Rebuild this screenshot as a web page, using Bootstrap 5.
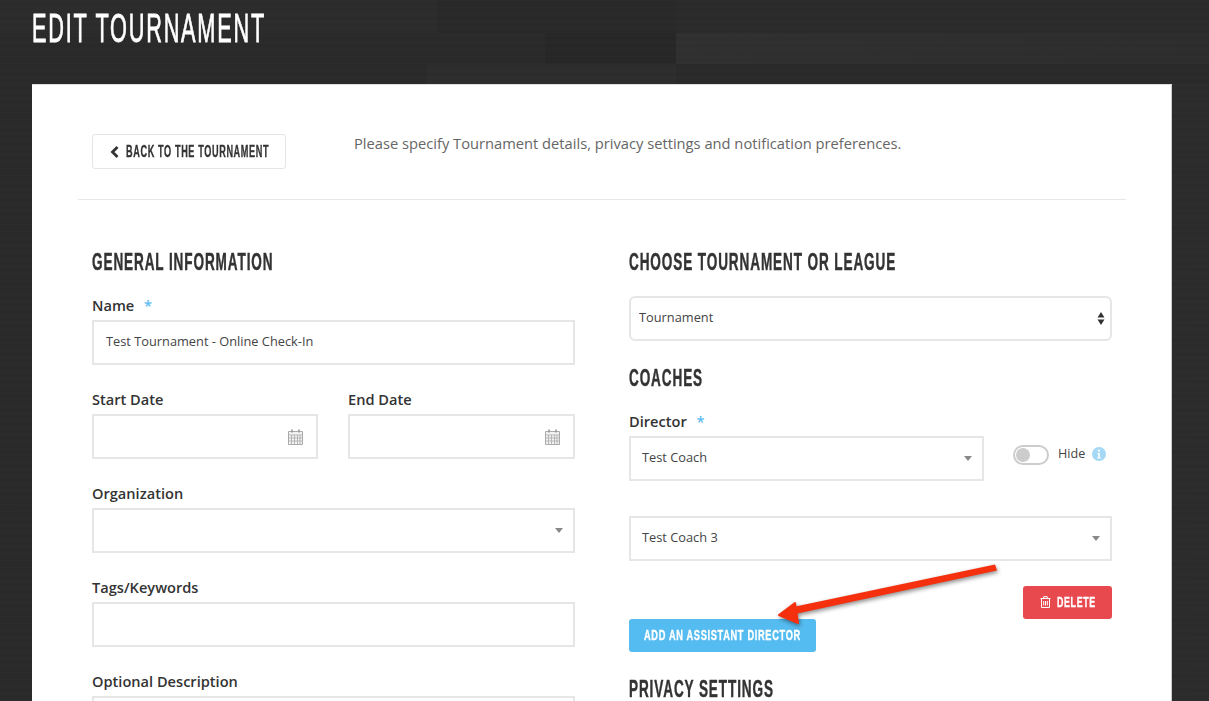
<!DOCTYPE html>
<html lang="en">
<head>
<meta charset="utf-8">
<title>Edit Tournament</title>
<link href="https://cdn.jsdelivr.net/npm/bootstrap@5.3.0/dist/css/bootstrap.min.css" rel="stylesheet">
<style>
html,body{height:100%;overflow:hidden}
body{font-family:"Open Sans","Noto Sans",sans-serif;color:#333;
 background-color:#292929;
 background-image:
  repeating-linear-gradient(180deg,rgba(255,255,255,.01) 0,rgba(255,255,255,.01) 1px,transparent 1px,transparent 3px,rgba(0,0,0,.03) 3px,rgba(0,0,0,.03) 4px,transparent 4px,transparent 7px),
  linear-gradient(90deg,#2c2c2c 0,#2c2c2c 437px,#292929 437px,#292929 676px,#2b2b2b 676px),
  linear-gradient(90deg,#2a2a2a 0,#2a2a2a 545px,#272727 545px,#272727 676px,#303030 676px,#2d2d2d 1209px),
  linear-gradient(90deg,#2a2a2a 0,#2a2a2a 426px,#2d2d2d 426px,#2d2d2d 676px,#2a2a2a 676px),
  linear-gradient(90deg,#2a2a2a,#2c2c2c);
 background-size:100% 100%,100% 33px,100% 31px,100% 20px,100% 100%;
 background-position:0 0,0 0,0 33px,0 64px,0 0;
 background-repeat:no-repeat}
.disp{font-family:"Liberation Sans",sans-serif;display:inline-block;transform-origin:left center;white-space:nowrap}
.head-bar{height:84px;padding-left:32px}
.page-title{margin:0;padding-top:6px;color:#fff;font-size:41px;line-height:44px;font-weight:400;letter-spacing:3.3px;transform:scaleX(.53);-webkit-text-stroke:.8px #fff}
.sheet{margin:0 37px 0 32px;background:#fff;padding:50px 46px 0;height:700px;box-shadow:inset 0 1px 0 #ddd,inset -1px 0 0 #ccc;position:relative}
.top-row{padding:0 14px;height:65px;gap:68px}
.back-btn{width:194px;height:35px;border:1px solid #e5e5e5;border-radius:3px;padding:0 0 0 17px;display:flex;align-items:center;gap:7px;background:#fff;color:#333;text-decoration:none;flex:none}
.back-label{font-size:16px;font-weight:700;letter-spacing:1.1px;transform:scaleX(.57);line-height:1;width:143px;-webkit-text-stroke:.35px #333}
.intro{font-size:14.7px;color:#666;margin:-1px 0 0;line-height:20px}
.rule{margin:0;border:0;border-top:1px solid #e6e6e6;opacity:1}
.cols{display:grid;grid-template-columns:483px 483px;gap:54px;padding:0 14px}
.sec-title{margin:0;font-size:23px;line-height:26px;font-weight:700;color:#333;letter-spacing:1.5px;transform:scaleX(.59);-webkit-text-stroke:.45px #333}
.lbl{display:block;font-size:14.6px;font-weight:600;line-height:18px;margin:0 0 6px;color:#333}
.lbl i{font-style:normal;color:#5bbcf0;margin-left:6px}
.fld{height:45px;border:2px solid #e6e6e6;border-radius:0;font-size:12.8px;color:#444;padding:0 12px 3px;box-shadow:none;background-color:#fff}
.form-select.fld{padding:0 30px 1px 11px;background-image:url("data:image/svg+xml,%3Csvg xmlns='http://www.w3.org/2000/svg' width='8' height='5'%3E%3Cpath d='M0 0h8L4 5z' fill='%23888'/%3E%3C/svg%3E");background-size:8px 5px;background-position:right 10px center}
.form-select.rounded-fld{border-radius:6px;padding-left:8px;background-image:url("data:image/svg+xml,%3Csvg xmlns='http://www.w3.org/2000/svg' width='8' height='13'%3E%3Cpath d='M4 0l3.5 5.5h-7zM4 13L.5 7.5h7z' fill='%23333'/%3E%3C/svg%3E");background-size:8px 13px;background-position:right 5px center}
.group{margin-bottom:25px}
.cal-wrap{position:relative}
.cal-ico{position:absolute;right:15px;top:15px;width:15px;height:16px}
.date-a{width:226px}
.date-b{width:227px}
.dir-sel{width:355px;flex:none}
.sw-box{margin-left:29px;padding-top:9px}
.form-check-input.sw{width:36px;height:20px;margin:0;flex:none;border:2px solid #ccc;border-radius:10px;background-color:#fff;background-image:url("data:image/svg+xml,%3Csvg xmlns='http://www.w3.org/2000/svg' viewBox='0 0 16 16'%3E%3Ccircle cx='8' cy='8' r='7' fill='%23ccc'/%3E%3C/svg%3E");background-size:contain;background-position:left center;box-shadow:none}
.hide-txt{font-size:12.6px;color:#444;line-height:20px;margin-left:9px;margin-top:-2px}
.info-ico{margin-left:7px;margin-top:-3px;flex:none}
.act-btn{border:0;border-radius:3px;height:33px;color:#fff;display:flex;align-items:center;justify-content:center;padding:0 0 2px;text-decoration:none}
.act-label{font-size:15px;font-weight:700;line-height:1;letter-spacing:1.1px;-webkit-text-stroke:.4px #fff}
.del-btn{width:89px;background:#e8494f;gap:6px}
.del-btn .act-label{transform:scaleX(.59);width:38px}
.add-btn{width:187px;background:#55bcf1;padding-left:15px;justify-content:flex-start}
.add-btn .act-label{transform:scaleX(.615)}
.pointer-arrow{position:absolute;left:0;top:0;width:1139px;height:617px;pointer-events:none;filter:drop-shadow(1px 2px 2px rgba(0,0,0,.45))}
.mt-sec{margin-top:49px}
.mt-fld{margin-top:20px}
.mt-next{margin-top:24px}
.mt-sel{margin-top:35px}
.mt-del{margin-top:25px}
</style>
</head>
<body>
<div class="head-bar"><h1 class="page-title disp">EDIT TOURNAMENT</h1></div>
<div class="sheet">
  <div class="top-row d-flex align-items-start">
    <a class="back-btn" href="#">
      <svg width="9" height="12" viewBox="0 0 9 12"><path d="M7.5 1 2.5 6l5 5" fill="none" stroke="#333" stroke-width="2.8"/></svg>
      <span class="back-label disp">BACK TO THE TOURNAMENT</span>
    </a>
    <p class="intro">Please specify Tournament details, privacy settings and notification preferences.</p>
  </div>
  <hr class="rule">
  <div class="cols">
    <div>
      <h2 class="sec-title disp mt-sec">GENERAL INFORMATION</h2>
      <div class="group mt-fld">
        <label class="lbl">Name <i>*</i></label>
        <input class="form-control fld" value="Test Tournament - Online Check-In">
      </div>
      <div class="d-flex justify-content-between group">
        <div class="date-a">
          <label class="lbl">Start Date</label>
          <div class="cal-wrap"><input class="form-control fld">
            <svg class="cal-ico" viewBox="0 0 15 16"><path d="M.5 2.5h14v13H.5z" fill="#f2f2f2" stroke="#aaa"/><path d="M.5 6h14M3.5 6v9M6.5 6v9M9.5 6v9M12 6v9M1 9h13M1 12h13" stroke="#aaa" fill="none" stroke-width=".8"/><path d="M4 .5v3M11 .5v3" stroke="#999" stroke-width="1.6"/></svg>
          </div>
        </div>
        <div class="date-b">
          <label class="lbl">End Date</label>
          <div class="cal-wrap"><input class="form-control fld">
            <svg class="cal-ico" viewBox="0 0 15 16"><path d="M.5 2.5h14v13H.5z" fill="#f2f2f2" stroke="#aaa"/><path d="M.5 6h14M3.5 6v9M6.5 6v9M9.5 6v9M12 6v9M1 9h13M1 12h13" stroke="#aaa" fill="none" stroke-width=".8"/><path d="M4 .5v3M11 .5v3" stroke="#999" stroke-width="1.6"/></svg>
          </div>
        </div>
      </div>
      <div class="group">
        <label class="lbl">Organization</label>
        <select class="form-select fld"><option></option></select>
      </div>
      <div class="group">
        <label class="lbl">Tags/Keywords</label>
        <input class="form-control fld">
      </div>
      <div class="group">
        <label class="lbl">Optional Description</label>
        <textarea class="form-control fld" rows="3"></textarea>
      </div>
    </div>
    <div>
      <h2 class="sec-title disp mt-sec">CHOOSE TOURNAMENT OR LEAGUE</h2>
      <select class="form-select fld rounded-fld mt-fld"><option>Tournament</option></select>
      <h2 class="sec-title disp mt-next">COACHES</h2>
      <div class="mt-fld">
        <label class="lbl">Director <i>*</i></label>
        <div class="d-flex align-items-start">
          <select class="form-select fld dir-sel"><option>Test Coach</option></select>
          <div class="d-flex align-items-center sw-box">
            <input class="form-check-input sw" type="checkbox" role="switch">
            <span class="hide-txt">Hide</span>
            <svg class="info-ico" width="14" height="14" viewBox="0 0 14 14"><circle cx="7" cy="7" r="7" fill="#a5d8f5"/><circle cx="7" cy="3.6" r="1.2" fill="#fff"/><path d="M5.4 6h2.4v4.4h1v1H5.2v-1h1V7h-.8z" fill="#fff"/></svg>
          </div>
        </div>
      </div>
      <select class="form-select fld mt-sel"><option>Test Coach 3</option></select>
      <div class="d-flex justify-content-end mt-del">
        <a class="act-btn del-btn" href="#">
          <svg width="11" height="12" viewBox="0 0 11 12"><path d="M1.5 3v8.5h8V3M.5 2.5h10M3.7 2.3V.7h3.6v1.6M3.7 5v4.5M5.5 5v4.5M7.3 5v4.5" fill="none" stroke="#fff" stroke-width="1"/></svg>
          <span class="act-label disp">DELETE</span>
        </a>
      </div>
      <a class="act-btn add-btn" href="#"><span class="act-label disp">ADD AN ASSISTANT DIRECTOR</span></a>
      <h2 class="sec-title disp mt-next">PRIVACY SETTINGS</h2>
    </div>
  </div>
  <svg class="pointer-arrow" viewBox="0 0 1139 617">
    <path d="M963 480.5 965 486.5 763 530 761 523z" fill="#f5300f"/>
    <path d="M747 531 763 519 766 539z" fill="#f5300f" stroke="#f5300f" stroke-width="2" stroke-linejoin="round"/>
  </svg>
</div>
</body>
</html>
